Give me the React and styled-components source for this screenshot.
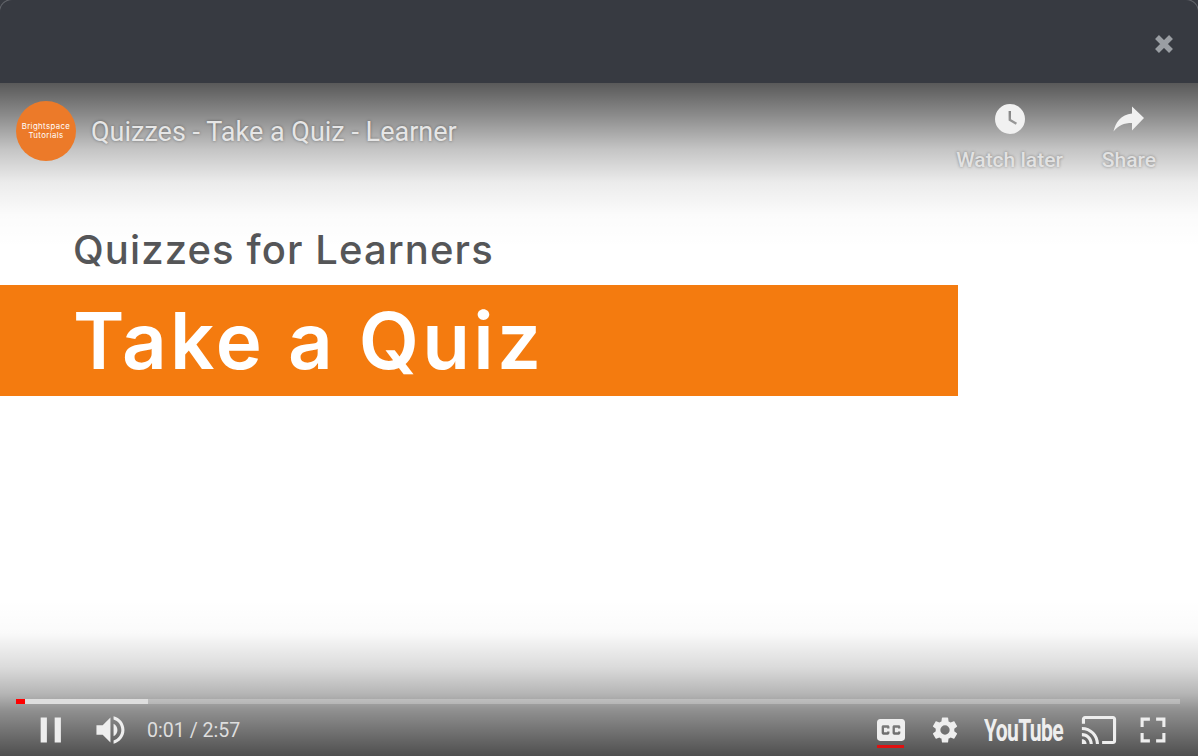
import React from 'react';
import styled, { createGlobalStyle } from 'styled-components';

const Global = createGlobalStyle`
  html, body {
    margin: 0;
    padding: 0;
    height: 100%;
    overflow: hidden;
    background: #373a41;
  }
  #root {
    height: 100%;
  }
`;

const controlsLeft = [
  {
    name: 'pause',
    width: 62,
    d: 'M12 26h4V10h-4zM21 26h4V10h-4z',
  },
  {
    name: 'volume',
    width: 63,
    d: 'M8 21h4l5 5V10l-5 5H8v6zM19 14v8c1.48-.68 2.5-2.23 2.5-4 0-1.74-1.02-3.26-2.5-4zM19 11.29c2.89.86 5 3.54 5 6.71s-2.11 5.85-5 6.71v2.06c4.01-.91 7-4.49 7-8.77s-2.99-7.86-7-8.77v2.06z',
  },
];

const App = () => {
  return (
    <Page>
      <Global />
      <TopBar>
        <CloseIcon viewBox="0 0 20 20" aria-label="Close">
          <path d="M3 3l14 14M17 3L3 17" />
        </CloseIcon>
      </TopBar>
      <Player>
        <Slide>
          <Subtitle>Quizzes for Learners</Subtitle>
          <Banner>
            <BannerText>Take a Quiz</BannerText>
          </Banner>
        </Slide>

        <TopOverlay>
          <ChannelLogo>
            <span>Brightspace</span>
            <span>Tutorials</span>
          </ChannelLogo>
          <VideoTitle>Quizzes - Take a Quiz - Learner</VideoTitle>
          <TopActions>
            <TopAction>
              <ActionIcon viewBox="0 0 32 32">
                <path
                  fillRule="evenodd"
                  d="M17 1a15 15 0 1 0 0 30 15 15 0 0 0 0-30zM15.600 8h2.400v8.200l6 3.600-1.200 2-7.200-4.400z"
                />
              </ActionIcon>
              <ActionLabel>Watch later</ActionLabel>
            </TopAction>
            <TopAction>
              <ActionIcon viewBox="0 0 32 32">
                <path d="M19 3.500L31 15 19 27.500V20c-8 0-14 2.500-18.500 8.500C2.500 19.500 8 11.500 19 10.500z" />
              </ActionIcon>
              <ActionLabel>Share</ActionLabel>
            </TopAction>
          </TopActions>
        </TopOverlay>

        <BottomOverlay>
          <ProgressTrack>
            <Buffered style={{ width: '11.3%' }} />
            <Played style={{ width: '0.8%' }} />
          </ProgressTrack>
          <Controls>
            <ControlGroup>
              {controlsLeft.map((c) => (
                <ControlButton key={c.name} $width={c.width}>
                  <ControlIcon viewBox="0 0 36 36">
                    <path d={c.d} />
                  </ControlIcon>
                </ControlButton>
              ))}
              <TimeText>0:01 / 2:57</TimeText>
            </ControlGroup>
            <RightGroup>
              <ControlButton $width={54} $active>
                <ControlIcon viewBox="0 0 36 36">
                  <path
                    fillRule="evenodd"
                    d="M11 11c-1.110 0-2 .9-2 2v10c0 1.100.89 2 2 2h14c1.100 0 2-.9 2-2V13c0-1.100-.9-2-2-2H11zM17 17h-1.500v-.5h-2v3h2V19H17v1c0 .55-.45 1-1 1h-3c-.55 0-1-.45-1-1v-4c0-.55.45-1 1-1h3c.55 0 1 .45 1 1v1zM24 17h-1.500v-.5h-2v3h2V19H24v1c0 .55-.45 1-1 1h-3c-.55 0-1-.45-1-1v-4c0-.55.45-1 1-1h3c.55 0 1 .45 1 1v1z"
                  />
                </ControlIcon>
              </ControlButton>
              <ControlButton $width={54}>
                <ControlIcon viewBox="0 0 36 36">
                  <path
                    fillRule="evenodd"
                    d="M23.940 18.780c.03-.25.05-.51.05-.78s-.02-.53-.05-.78l1.690-1.320c.15-.12.19-.34.1-.51l-1.600-2.770c-.1-.18-.31-.24-.49-.18l-1.990.8c-.42-.32-.86-.58-1.350-.78L20 10.340a.4.4 0 0 0-.4-.34h-3.200c-.2 0-.37.14-.39.34l-.3 2.120c-.49.2-.94.47-1.350.78l-1.990-.8c-.18-.07-.39 0-.49.18l-1.600 2.770c-.1.18-.06.39.1.51l1.690 1.320c-.03.25-.05.52-.05.78s.02.53.05.78l-1.690 1.320c-.15.12-.19.34-.1.51l1.600 2.770c.1.18.31.24.49.18l1.990-.8c.42.32.86.58 1.350.78l.3 2.120c.02.2.19.34.39.34h3.200c.2 0 .37-.14.39-.34l.3-2.120c.49-.2.94-.47 1.350-.78l1.990.8c.18.07.39 0 .49-.18l1.600-2.770c.1-.18.06-.39-.1-.51l-1.670-1.320zM18 21a3 3 0 1 1 0-6 3 3 0 0 1 0 6z"
                  />
                </ControlIcon>
              </ControlButton>
              <LogoSlot>
                <YouTubeWord>YouTube</YouTubeWord>
              </LogoSlot>
              <ControlButton $width={54}>
                <ControlIcon viewBox="0 0 36 36">
                  <path d="M27 9H9c-1.100 0-2 .9-2 2v3h2v-3h18v14h-7v2h7c1.100 0 2-.9 2-2V11c0-1.100-.9-2-2-2zM7 24v3h3c0-1.660-1.340-3-3-3zM7 20v2c2.760 0 5 2.240 5 5h2c0-3.870-3.130-7-7-7zM7 16v2c4.970 0 9 4.030 9 9h2c0-6.080-4.930-11-11-11z" />
                </ControlIcon>
              </ControlButton>
              <ControlButton $width={54}>
                <ControlIcon viewBox="0 0 36 36">
                  <path d="M10 16h2v-4h4v-2h-6zM20 10v2h4v4h2v-6zM24 24h-4v2h6v-6h-2zM12 20h-2v6h6v-2h-4z" />
                </ControlIcon>
              </ControlButton>
            </RightGroup>
          </Controls>
        </BottomOverlay>
      </Player>
    </Page>
  );
};

const Page = styled.div`
  width: 1198px;
  height: 756px;
  display: flex;
  flex-direction: column;
  overflow: hidden;
  font-family: Roboto, 'Liberation Sans', sans-serif;
`;

const TopBar = styled.div`
  position: relative;
  height: 83px;
  flex: none;
  display: flex;
  align-items: flex-start;
  justify-content: flex-end;
  padding: 34px 24px 0 0;
  box-sizing: border-box;
  background: #373a41;
  overflow: hidden;

  /* faint rounded edge of the dialog behind the bar */
  &::before {
    content: '';
    position: absolute;
    top: -1px;
    left: -1px;
    right: -1px;
    height: 40px;
    border: 1px solid rgba(255, 255, 255, 0.22);
    border-bottom: none;
    border-radius: 13px 13px 0 0;
  }
`;

const CloseIcon = styled.svg`
  width: 20px;
  height: 20px;
  fill: none;
  stroke: #9a9ea3;
  stroke-width: 5.5px;
`;

const Player = styled.div`
  position: relative;
  flex: 1;
  background: #fff;
  overflow: hidden;
`;

const Slide = styled.div`
  padding-top: 142px;
`;

const Subtitle = styled.div`
  margin-left: 73px;
  height: 60px;
  font-family: Inter, 'Noto Sans', sans-serif;
  font-size: 40px;
  font-weight: 500;
  line-height: 50px;
  letter-spacing: 1.1px;
  color: #555658;
  white-space: nowrap;
`;

const Banner = styled.div`
  width: 958px;
  height: 111px;
  background: #f47b0f;
  display: flex;
  align-items: center;
  padding-left: 73px;
  box-sizing: border-box;
`;

const BannerText = styled.div`
  font-family: Inter, 'Noto Sans', sans-serif;
  font-size: 78px;
  font-weight: 600;
  line-height: 90px;
  letter-spacing: 3.2px;
  color: #fff;
  white-space: nowrap;
`;

const TopOverlay = styled.div`
  position: absolute;
  top: 0;
  left: 0;
  right: 0;
  height: 165px;
  display: flex;
  align-items: flex-start;
  padding: 18px 0 0 16px;
  box-sizing: border-box;
  background: linear-gradient(
    to bottom,
    rgba(0, 0, 0, 0.65) 0%,
    rgba(0, 0, 0, 0.45) 20%,
    rgba(0, 0, 0, 0.23) 40%,
    rgba(0, 0, 0, 0.08) 60%,
    rgba(0, 0, 0, 0.015) 80%,
    rgba(0, 0, 0, 0) 100%
  );
`;

const ChannelLogo = styled.div`
  width: 60px;
  height: 60px;
  flex: none;
  border-radius: 50%;
  background: #ec7a29;
  color: #fff;
  display: flex;
  flex-direction: column;
  align-items: center;
  justify-content: center;
  font-family: Inter, sans-serif;
  font-size: 7.8px;
  line-height: 9.5px;
  letter-spacing: 0.4px;
`;

const VideoTitle = styled.div`
  margin-left: 15px;
  font-size: 27px;
  line-height: 62px;
  color: #e6e6e6;
  text-shadow: 0 0 3px rgba(0, 0, 0, 0.4);
  white-space: nowrap;
`;

const TopActions = styled.div`
  margin-left: auto;
  display: flex;
  padding-right: 42px;
  gap: 39px;
`;

const TopAction = styled.div`
  display: flex;
  flex-direction: column;
  align-items: center;
`;

const ActionIcon = styled.svg`
  width: 32px;
  height: 32px;
  margin-top: 2px;
  fill: #f1f1f1;
  display: block;
`;

const ActionLabel = styled.div`
  margin-top: 12px;
  font-size: 21px;
  font-weight: 500;
  line-height: 26px;
  color: #e2e2e2;
  text-shadow: 0 0 3px rgba(0, 0, 0, 0.4);
  white-space: nowrap;
`;

const BottomOverlay = styled.div`
  position: absolute;
  left: 0;
  right: 0;
  bottom: 0;
  height: 156px;
  padding: 0 19px 0 16px;
  box-sizing: border-box;
  display: flex;
  flex-direction: column;
  justify-content: flex-end;
  background: linear-gradient(
    to bottom,
    rgba(0, 0, 0, 0) 0%,
    rgba(0, 0, 0, 0.02) 21%,
    rgba(0, 0, 0, 0.14) 43%,
    rgba(0, 0, 0, 0.29) 60%,
    rgba(0, 0, 0, 0.44) 71%,
    rgba(0, 0, 0, 0.56) 85%,
    rgba(0, 0, 0, 0.69) 100%
  );
`;

const ProgressTrack = styled.div`
  position: relative;
  height: 5px;
  flex: none;
  margin-right: -1px;
  background: rgba(255, 255, 255, 0.25);
`;

const Buffered = styled.div`
  position: absolute;
  top: 0;
  bottom: 0;
  left: 0;
  background: #dedede;
`;

const Played = styled.div`
  position: absolute;
  top: 0;
  bottom: 0;
  left: 0;
  background: #f00;
`;

const Controls = styled.div`
  height: 52px;
  flex: none;
  display: flex;
  align-items: center;
  justify-content: space-between;
`;

const ControlGroup = styled.div`
  display: flex;
  align-items: center;
  padding-left: 6px;
`;

const RightGroup = styled.div`
  display: flex;
  align-items: center;
`;

const ControlButton = styled.div`
  position: relative;
  width: ${(p) => p.$width}px;
  height: 52px;
  display: flex;
  align-items: center;
  justify-content: flex-start;

  &::after {
    content: '';
    display: ${(p) => (p.$active ? 'block' : 'none')};
    position: absolute;
    left: 14px;
    top: 41px;
    width: 27px;
    height: 3px;
    background: #e01010;
  }
`;

const ControlIcon = styled.svg`
  width: 56px;
  height: 56px;
  flex: none;
  fill: #eee;
`;

const TimeText = styled.div`
  font-size: 19.6px;
  color: #dedede;
  white-space: nowrap;
`;

const LogoSlot = styled.div`
  width: 100px;
  height: 52px;
  display: flex;
  align-items: center;
  padding-left: 13px;
  box-sizing: border-box;
`;

const YouTubeWord = styled.div`
  font-size: 32px;
  font-weight: 700;
  color: #eee;
  letter-spacing: -1px;
  transform: scaleX(0.66);
  transform-origin: left center;
  white-space: nowrap;
`;

export default App;
